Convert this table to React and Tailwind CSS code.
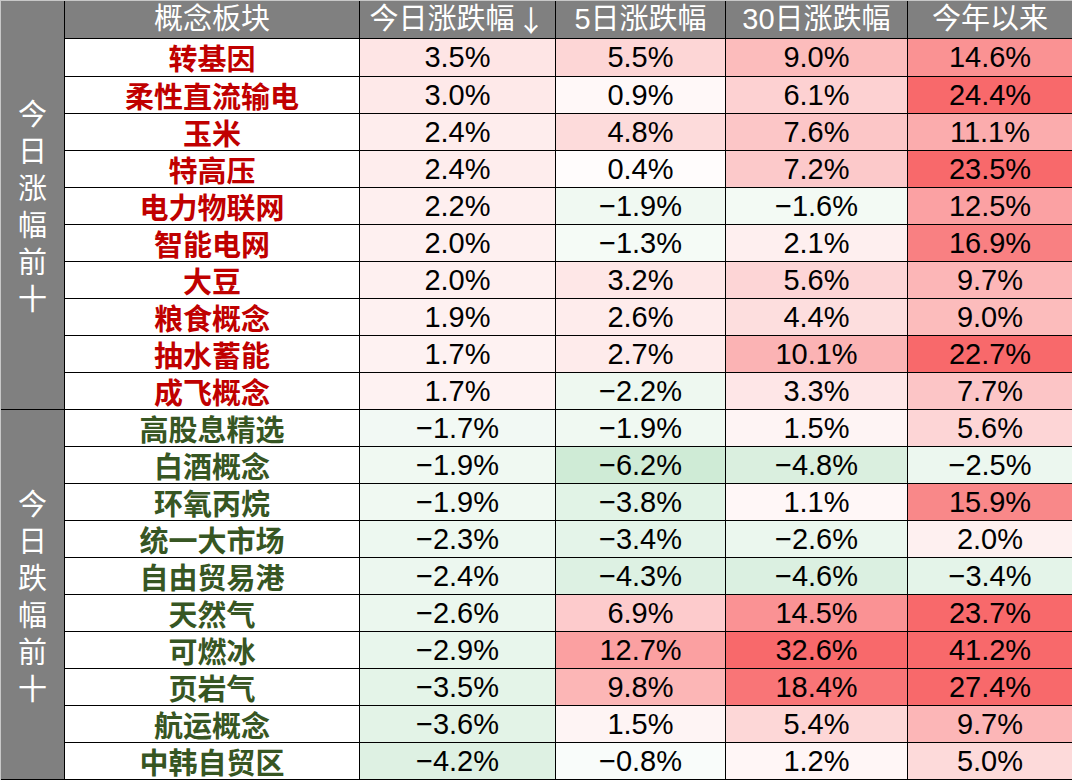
import React from "react";

const top = [
  ["转基因", 3.5, 5.5, 9.0, 14.6],
  ["柔性直流输电", 3.0, 0.9, 6.1, 24.4],
  ["玉米", 2.4, 4.8, 7.6, 11.1],
  ["特高压", 2.4, 0.4, 7.2, 23.5],
  ["电力物联网", 2.2, -1.9, -1.6, 12.5],
  ["智能电网", 2.0, -1.3, 2.1, 16.9],
  ["大豆", 2.0, 3.2, 5.6, 9.7],
  ["粮食概念", 1.9, 2.6, 4.4, 9.0],
  ["抽水蓄能", 1.7, 2.7, 10.1, 22.7],
  ["成飞概念", 1.7, -2.2, 3.3, 7.7],
];

const bottom = [
  ["高股息精选", -1.7, -1.9, 1.5, 5.6],
  ["白酒概念", -1.9, -6.2, -4.8, -2.5],
  ["环氧丙烷", -1.9, -3.8, 1.1, 15.9],
  ["统一大市场", -2.3, -3.4, -2.6, 2.0],
  ["自由贸易港", -2.4, -4.3, -4.6, -3.4],
  ["天然气", -2.6, 6.9, 14.5, 23.7],
  ["可燃冰", -2.9, 12.7, 32.6, 41.2],
  ["页岩气", -3.5, 9.8, 18.4, 27.4],
  ["航运概念", -3.6, 1.5, 5.4, 9.7],
  ["中韩自贸区", -4.2, -0.8, 1.2, 5.0],
];

function bg(v) {
  const t = Math.min(1, Math.abs(v) / 20);
  const target = v >= 0 ? [248, 105, 107] : [99, 190, 123];
  const c = target.map((x) => Math.round(255 + (x - 255) * t));
  return `rgb(${c[0]},${c[1]},${c[2]})`;
}

function fmt(v) {
  const s = Math.abs(v).toFixed(1) + "%";
  return v < 0 ? "\u2212" + s : s;
}

function SideLabel({ text, span }) {
  return (
    <div
      className={`${span} bg-[#808080] border-r border-b border-black flex flex-col items-center justify-center text-white text-[29px] leading-none font-['Noto_Sans_CJK_SC',sans-serif]`}
    >
      {text.split("").map((ch, i) => (
        <div key={i} className="h-[37px] flex items-center justify-center">
          {ch}
        </div>
      ))}
    </div>
  );
}

function Row({ row, red }) {
  const [name, ...vals] = row;
  return (
    <>
      <div
        className={`bg-white border-r border-b border-black flex items-center justify-center text-[29px] leading-none font-bold font-['Noto_Sans_CJK_SC',sans-serif] ${
          red ? "text-[#C00000]" : "text-[#375623]"
        }`}
      >
        {name}
      </div>
      {vals.map((v, i) => (
        <div
          key={i}
          className={`border-b border-black flex items-center justify-center text-[29px] leading-none text-black font-['Liberation_Sans',Arial,sans-serif] ${
            i < 3 ? "border-r" : ""
          }`}
          style={{ backgroundColor: bg(v) }}
        >
          {fmt(v)}
        </div>
      ))}
    </>
  );
}

function HeaderCell({ children, last }) {
  return (
    <div
      className={`bg-[#808080] border-b border-black flex items-center justify-center text-white text-[29px] leading-none font-['Liberation_Sans','Noto_Sans_CJK_SC',sans-serif] ${
        last ? "" : "border-r"
      }`}
    >
      {children}
    </div>
  );
}

export default function App() {
  return (
    <div className="w-[1072px] h-[780px] bg-white overflow-hidden">
      <div className="border-t border-l border-[#c8c8c8] grid grid-cols-[64px_295px_196px_170px_182px_164px] grid-rows-[38px_38px_repeat(19,37px)]">
        <SideLabel text="今日涨幅前十" span="row-span-11" />
        <HeaderCell>概念板块</HeaderCell>
        <HeaderCell>
          今日涨跌幅
          <span className="ml-[2px] font-['Noto_Sans_CJK_SC',sans-serif]">↓</span>
        </HeaderCell>
        <HeaderCell>5日涨跌幅</HeaderCell>
        <HeaderCell>30日涨跌幅</HeaderCell>
        <HeaderCell last>今年以来</HeaderCell>
        {top.map((r, i) => (
          <Row key={"t" + i} row={r} red />
        ))}
        <SideLabel text="今日跌幅前十" span="row-span-10" />
        {bottom.map((r, i) => (
          <Row key={"b" + i} row={r} red={false} />
        ))}
      </div>
    </div>
  );
}
